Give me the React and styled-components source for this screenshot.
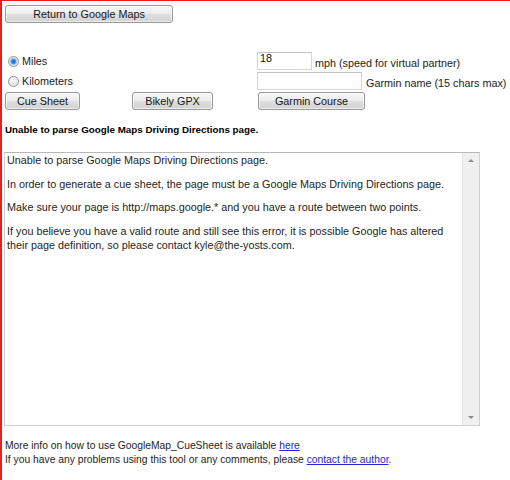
import React from "react";
import styled, { createGlobalStyle } from "styled-components";

// page-wide reset and base font
const GlobalStyle = createGlobalStyle`
  html, body {
    margin: 0;
    padding: 0;
    background: #fff;
  }
  body {
    font-family: "Liberation Sans", Arial, sans-serif;
    font-size: 10.8px;
    color: #1c1c1c;
  }
`;

const Page = styled.div`
  box-sizing: border-box;
  width: 510px;
  height: 480px;
  overflow: hidden;
  border-left: 2px solid #f01c1c;
  border-top: 1px solid #f01c1c;
  padding: 4px 0 0 3px;
`;

const Button = styled.button`
  box-sizing: border-box;
  display: block;
  width: ${(p) => p.$w}px;
  height: 18px;
  margin-left: ${(p) => p.$shift || 0}px;
  padding: 0;
  font-family: inherit;
  font-size: 10.8px;
  color: #151515;
  border: 1px solid #999;
  border-radius: 3px;
  background: linear-gradient(#f7f7f7 0%, #ededed 48%, #dedede 52%, #d3d3d3 100%);
  box-shadow: inset 0 0 0 1px rgba(255, 255, 255, 0.55);
  cursor: pointer;
`;

const Options = styled.div`
  display: grid;
  grid-template-columns: 126px 126px auto;
  grid-auto-rows: 18px;
  row-gap: 2px;
  margin-top: 29px;
`;

const RadioLabel = styled.label`
  grid-column: 1 / 3;
  display: flex;
  align-items: center;
  padding-left: 2px;
`;

const Radio = styled.input`
  appearance: none;
  box-sizing: border-box;
  width: 11px;
  height: 11px;
  margin: 0 3px 0 1px;
  border: 1px solid #939393;
  border-radius: 50%;
  background: radial-gradient(circle at 50% 40%, #fdfdfd, #d9d9d9);

  &:checked {
    background: radial-gradient(circle, #1b6fc2 0, #2a8ee8 2px, #9cc6ec 3px, #e8e8e8 4px, #d4d4d4 100%);
  }
`;

const Field = styled.div`
  grid-column: 3;
  display: flex;
  align-items: flex-end;
  line-height: 14px;
`;

const TextInput = styled.input`
  box-sizing: border-box;
  width: ${(p) => p.$w}px;
  height: 18px;
  margin: 0 ${(p) => p.$gap}px 0 0;
  padding: 0 2px 6px;
  font-family: inherit;
  font-size: 10.8px;
  line-height: 10px;
  color: #111;
  border: 1px solid #d6d6d6;
  border-top-color: #c4c4c4;
  outline: none;
`;

const Status = styled.div`
  margin-top: 13px;
  font-weight: bold;
  font-size: 9.8px;
  line-height: 14px;
  color: #000;
`;

const Output = styled.div`
  box-sizing: border-box;
  display: flex;
  width: 476px;
  height: 274px;
  margin: 15px 0 0 -1px;
  border: 1px solid #d0d0d0;
  border-top-color: #b8b8b8;
`;

const OutputText = styled.div`
  flex: 1;
  padding: 0 2px;
  line-height: 14px;
  color: #1e1e1e;

  p {
    margin: 0 0 9.5px;
  }
`;

const Scrollbar = styled.div`
  width: 16px;
  display: flex;
  flex-direction: column;
  justify-content: space-between;
  align-items: center;
  padding: 6px 0;
  background: #f0f0f0;
  border-left: 1px solid #e4e4e4;
`;

const Arrow = styled.span`
  width: 0;
  height: 0;
  border-left: 3px solid transparent;
  border-right: 3px solid transparent;
  ${(p) =>
    p.$down
      ? "border-top: 3px solid #8c8c8c;"
      : "border-bottom: 3px solid #8c8c8c;"}
`;

const Footer = styled.div`
  margin-top: 13px;
  font-size: 10.3px;
  line-height: 14px;
  color: #1e1e1e;
`;

const Link = styled.a`
  color: #2424d8;
  text-decoration: underline;
`;

export default function App() {
  return (
    <Page>
      <GlobalStyle />
      <Button $w={168}>Return to Google Maps</Button>

      <Options>
        <RadioLabel>
          <Radio type="radio" name="units" defaultChecked />
          Miles
        </RadioLabel>
        <Field>
          <TextInput $w={55} $gap={3} defaultValue="18" />
          mph (speed for virtual partner)
        </Field>

        <RadioLabel>
          <Radio type="radio" name="units" />
          Kilometers
        </RadioLabel>
        <Field>
          <TextInput $w={105} $gap={4} />
          Garmin name (15 chars max)
        </Field>

        <Button $w={75}>Cue Sheet</Button>
        <Button $w={81} $shift={1}>Bikely GPX</Button>
        <Button $w={107} $shift={1}>Garmin Course</Button>
      </Options>

      <Status>Unable to parse Google Maps Driving Directions page.</Status>

      <Output>
        <OutputText>
          <p>Unable to parse Google Maps Driving Directions page.</p>
          <p>In order to generate a cue sheet, the page must be a Google Maps Driving Directions page.</p>
          <p>Make sure your page is http://maps.google.* and you have a route between two points.</p>
          <p>
            If you believe you have a valid route and still see this error, it is possible Google has altered
            <br />
            their page definition, so please contact kyle@the-yosts.com.
          </p>
        </OutputText>
        <Scrollbar>
          <Arrow />
          <Arrow $down />
        </Scrollbar>
      </Output>

      <Footer>
        More info on how to use GoogleMap_CueSheet is available <Link href="#">here</Link>
        <br />
        If you have any problems using this tool or any comments, please{" "}
        <Link href="#">contact the author</Link>.
      </Footer>
    </Page>
  );
}
